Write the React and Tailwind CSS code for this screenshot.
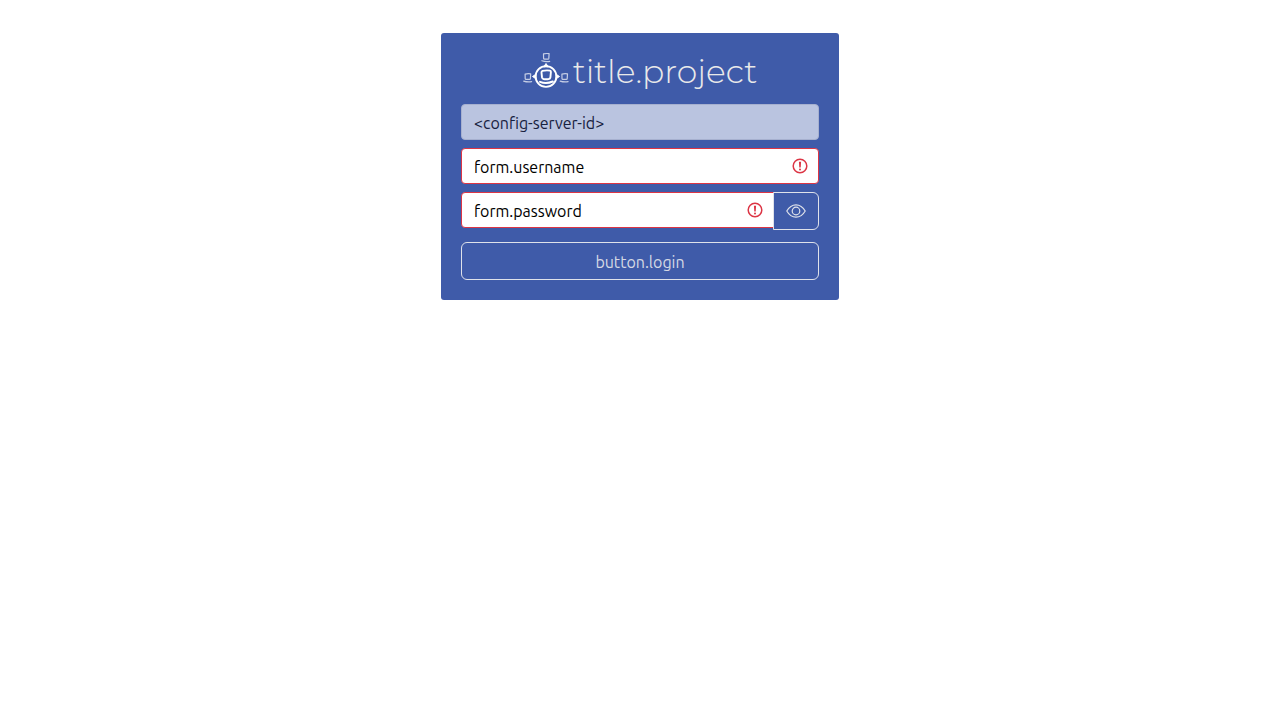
function Logo() {
  return (
    <svg viewBox="0 0 46 36" className="h-9 w-[46px] shrink-0" fill="none" stroke="#fff" strokeLinecap="round" strokeLinejoin="round" aria-hidden="true">
      <circle cx="23" cy="24.500" r="10.400" strokeWidth="1.900" />
      <path d="M21 14.500 23 11.500l2 3zM12.500 22.500l-3 2 3 2zM33.500 22.500l3 2-3 2z" fill="#fff" strokeWidth="1" />
      <path d="M19.500 18.900q3.800-.9 7.400-.3 1.100.3 1 1.400l-.5 5.300q-.2 1.400-1.700 1.700-2.600.4-5.200 0-1.300-.3-1.500-1.600l-.5-5q-.1-1.200 1-1.500z" strokeWidth="1.900" />
      <path d="M17 29.900q6.200 2.400 12.800-.4" strokeWidth="2" />
      <g strokeWidth="1.200" opacity="0.7">
        <path d="M20.500 1.900q2.800-.7 5.600-.2l-.3 4.700q-.1.700-.9.800h-3.400q-.8 0-.9-.8zM18.800 8.800q4 1.300 7.900.5" />
        <path d="M2.100 22.100q2.800-.7 5.600-.2l-.3 4.700q-.1.700-.9.800h-3.400q-.8 0-.9-.8zM.7 29.100q4 1.300 7.900.5" />
        <path d="M38.900 22.100q2.800-.7 5.600-.2l-.3 4.700q-.1.700-.9.800h-3.400q-.8 0-.9-.8zM37.200 29.100q4 1.300 7.900.5" />
      </g>
    </svg>
  );
}

function ErrorIcon() {
  return (
    <svg viewBox="0 0 16 16" className="pointer-events-none absolute top-2.5 right-[11px] size-4" fill="none" stroke="#dc3545" aria-hidden="true">
      <circle cx="8" cy="8" r="6.800" strokeWidth="1.500" />
      <path d="M6.900 3.700h2.200l-.4 5.700H7.300z" fill="#dc3545" stroke="none" />
      <circle cx="8" cy="11.500" r="1" fill="#dc3545" stroke="none" />
    </svg>
  );
}

function EyeIcon() {
  return (
    <svg viewBox="0 0 20 14" className="h-3.5 w-5" fill="none" stroke="#dfe2ea" strokeWidth="1.200" aria-hidden="true">
      <path d="M.8 7C3 3.200 6.200.8 10 .8S17 3.200 19.200 7C17 10.800 13.800 13.200 10 13.200S3 10.800.8 7z" />
      <circle cx="10" cy="7" r="3.800" />
    </svg>
  );
}

export default function App() {
  return (
    <main className="flex justify-center px-4 pt-[33px] font-['Ubuntu','Noto_Sans',sans-serif] text-base">
      <form className="flex w-full max-w-[398px] flex-col gap-2 rounded-[3px] bg-[#3f5ba9] p-5" onSubmit={(e) => e.preventDefault()}>
        <h1 className="-mt-px mb-2 flex h-9 items-center justify-center gap-1 font-['Montserrat','Lato',sans-serif] text-[33px] leading-9 font-light text-[#e9e9e9]">
          <Logo />
          <span className="pt-0.5">title.project</span>
        </h1>
        <input
          aria-label="Server"
          disabled
          defaultValue="<config-server-id>"
          className="h-9 w-full rounded border border-[#a6b0cf] bg-[#bac4e0] px-3 pt-0.5 text-[#17213f]"
        />
        <div className="relative">
          <input
            aria-label="form.username"
            placeholder="form.username"
            className="block h-9 w-full rounded border border-[#dc3545] bg-white pt-0.5 pr-9 pl-3 text-black placeholder:text-black"
          />
          <ErrorIcon />
        </div>
        <div className="flex items-start">
          <div className="relative min-w-0 flex-1">
            <input
              type="password"
              aria-label="form.password"
              placeholder="form.password"
              className="block h-9 w-full rounded-l border border-[#dc3545] bg-white pt-0.5 pr-9 pl-3 text-black placeholder:text-black"
            />
            <ErrorIcon />
          </div>
          <button type="button" aria-label="Show password" className="relative -ml-px flex h-[38px] w-[46px] items-center justify-center rounded-r-md border border-[#dfe2ea]">
            <EyeIcon />
          </button>
        </div>
        <button type="submit" className="mt-1 h-[38px] rounded-md border border-[#dfe2ea] pt-0.5 text-[#d5d9e4]">
          button.login
        </button>
      </form>
    </main>
  );
}
